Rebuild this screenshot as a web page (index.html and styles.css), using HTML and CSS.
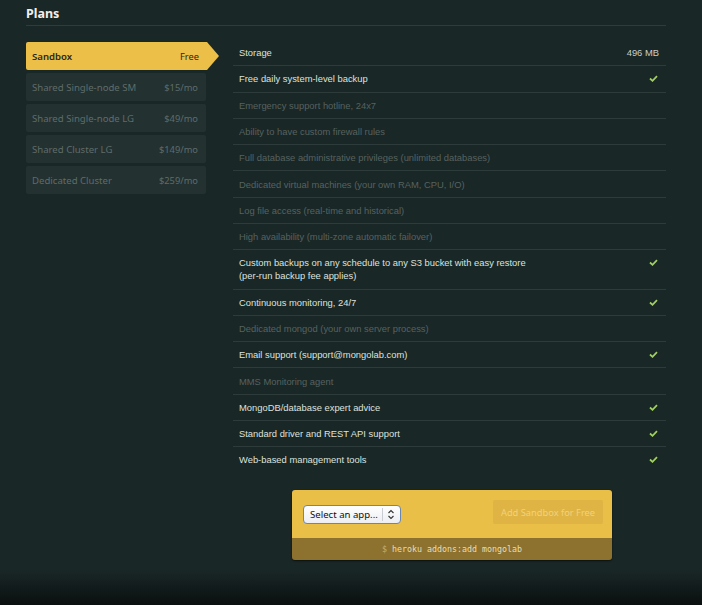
FILE: index.html
```html
<!DOCTYPE html>
<html>
<head>
<meta charset="utf-8">
<link rel="stylesheet" href="styles.css">
</head>
<body>
<div class="page">
  <h2 class="title">Plans</h2>
  <div class="content">
    <ul class="plans">
      <li class="plan active"><span class="pname">Sandbox</span><span class="price">Free</span></li>
      <li class="plan"><span class="pname">Shared Single-node SM</span><span class="price">$15/mo</span></li>
      <li class="plan"><span class="pname">Shared Single-node LG</span><span class="price">$49/mo</span></li>
      <li class="plan"><span class="pname">Shared Cluster LG</span><span class="price">$149/mo</span></li>
      <li class="plan"><span class="pname">Dedicated Cluster</span><span class="price">$259/mo</span></li>
    </ul>
    <div class="main">
      <ul class="features">
        <li class="feat on"><span>Storage</span><span class="val">496 MB</span></li>
        <li class="feat on"><span>Free daily system-level backup</span><svg class="chk" viewBox="0 0 9 7"><path d="M1 3.5 L3.5 5.8 L8 1.2"/></svg></li>
        <li class="feat"><span>Emergency support hotline, 24x7</span></li>
        <li class="feat"><span>Ability to have custom firewall rules</span></li>
        <li class="feat"><span>Full database administrative privileges (unlimited databases)</span></li>
        <li class="feat"><span>Dedicated virtual machines (your own RAM, CPU, I/O)</span></li>
        <li class="feat"><span>Log file access (real-time and historical)</span></li>
        <li class="feat"><span>High availability (multi-zone automatic failover)</span></li>
        <li class="feat on"><span>Custom backups on any schedule to any S3 bucket with easy restore<br>(per-run backup fee applies)</span><svg class="chk" viewBox="0 0 9 7"><path d="M1 3.5 L3.5 5.8 L8 1.2"/></svg></li>
        <li class="feat on"><span>Continuous monitoring, 24/7</span><svg class="chk" viewBox="0 0 9 7"><path d="M1 3.5 L3.5 5.8 L8 1.2"/></svg></li>
        <li class="feat"><span>Dedicated mongod (your own server process)</span></li>
        <li class="feat on"><span>Email support (support@mongolab.com)</span><svg class="chk" viewBox="0 0 9 7"><path d="M1 3.5 L3.5 5.8 L8 1.2"/></svg></li>
        <li class="feat"><span>MMS Monitoring agent</span></li>
        <li class="feat on"><span>MongoDB/database expert advice</span><svg class="chk" viewBox="0 0 9 7"><path d="M1 3.5 L3.5 5.8 L8 1.2"/></svg></li>
        <li class="feat on"><span>Standard driver and REST API support</span><svg class="chk" viewBox="0 0 9 7"><path d="M1 3.5 L3.5 5.8 L8 1.2"/></svg></li>
        <li class="feat on"><span>Web-based management tools</span><svg class="chk" viewBox="0 0 9 7"><path d="M1 3.5 L3.5 5.8 L8 1.2"/></svg></li>
      </ul>
      <div class="card">
        <div class="card-top">
          <div class="select"><span class="sel-text">Select an app...</span><span class="sel-sep"></span><svg class="sel-arrows" viewBox="0 0 8 11"><path d="M1.5 4 L4 1.5 L6.5 4 M1.5 7 L4 9.5 L6.5 7"/></svg></div>
          <div class="btn">Add Sandbox for Free</div>
        </div>
        <div class="card-cmd"><span class="dollar">$</span> heroku addons:add mongolab</div>
      </div>
    </div>
  </div>
</div>
</body>
</html>
```

FILE: styles.css
```css
html, body {
  margin: 0;
  padding: 0;
}
body {
  width: 702px;
  height: 605px;
  overflow: hidden;
  background: linear-gradient(to bottom, #1a2727 0, #1a2727 570px, #0a0f0f 605px);
  font-family: "Liberation Sans", Arial, sans-serif;
}
.page {
  padding: 0 36px 0 26px;
}
.title {
  margin: 0;
  height: 26px;
  padding-top: 6px;
  box-sizing: border-box;
  font-family: "Noto Sans", "Open Sans", sans-serif;
  font-size: 12.5px;
  font-weight: 700;
  color: #eef0ee;
  line-height: 16px;
  border-bottom: 1px solid #2e3c3c;
}
.content {
  display: flex;
  align-items: flex-start;
}
.plans {
  list-style: none;
  margin: 16px 0 0;
  padding: 0;
  width: 180px;
  display: flex;
  flex-direction: column;
  gap: 3px;
}
.plan {
  position: relative;
  height: 28px;
  display: flex;
  justify-content: space-between;
  align-items: center;
  padding: 0 8px 0 6px;
  background: #233131;
  border-radius: 2px;
  font-family: "Noto Sans", "Open Sans", sans-serif;
  font-size: 9.6px;
  color: #5f6c69;
}
.plan .price {
  font-size: 9.3px;
}
.plan.active {
  background: #ebbf48;
  color: #2b2712;
  width: 181px;
  box-sizing: border-box;
  border-radius: 2px 0 0 2px;
  padding-right: 8px;
}
.plan.active .pname {
  font-weight: 600;
}
.plan.active::after {
  content: "";
  position: absolute;
  left: 100%;
  top: 0;
  border-style: solid;
  border-width: 14px 0 14px 12px;
  border-color: transparent transparent transparent #ebbf48;
}
.main {
  margin-left: 27px;
  flex: 1;
}
.features {
  list-style: none;
  margin: 14px 0 0;
  padding: 0;
}
.feat {
  display: flex;
  justify-content: space-between;
  align-items: flex-start;
  padding: 6.2px 7px 6.1px 6px;
  line-height: 13px;
  font-size: 9.4px;
  color: #56625f;
  border-bottom: 1px solid #2d3b3b;
}
.feat:last-child {
  border-bottom: none;
}
.feat.on {
  color: #dde2de;
}
.feat .val {
  color: #c9cfcb;
}
.chk {
  width: 9px;
  height: 7px;
  margin-top: 3px;
  margin-right: 1px;
  fill: none;
  stroke: #9fcf60;
  stroke-width: 1.8;
}
.card {
  margin: 17px 0 0 59px;
  width: 320px;
  border-radius: 3px;
  overflow: hidden;
  box-shadow: 0 1px 2px rgba(0,0,0,0.6);
}
.card-top {
  background: #e9bf48;
  height: 48px;
  display: flex;
  justify-content: space-between;
  align-items: center;
  padding: 0 9px 0 11px;
}
.select {
  width: 98px;
  height: 19px;
  box-sizing: border-box;
  border: 1px solid #6b86ae;
  border-radius: 4px;
  background: linear-gradient(to bottom, #ffffff, #eceef2);
  display: flex;
  align-items: center;
  padding-left: 6px;
  font-family: "Noto Sans", "Open Sans", sans-serif;
  font-size: 9.6px;
  color: #111;
  margin-top: 2px;
}
.sel-text {
  flex: 1;
  white-space: nowrap;
}
.sel-sep {
  width: 1px;
  height: 13px;
  background: #c9ccd2;
  margin-right: 4px;
}
.sel-arrows {
  width: 8px;
  height: 11px;
  margin-right: 5px;
  fill: none;
  stroke: #333;
  stroke-width: 1.1;
}
.btn {
  width: 110px;
  height: 24px;
  background: #dfb444;
  border-radius: 2px;
  display: flex;
  align-items: center;
  justify-content: center;
  font-family: "Noto Sans", "Open Sans", sans-serif;
  font-size: 9.3px;
  color: #f2d27a;
  margin-bottom: 3px;
}
.card-cmd {
  background: #8c722e;
  height: 22px;
  line-height: 22px;
  text-align: center;
  font-family: "DejaVu Sans Mono", "Liberation Mono", monospace;
  font-size: 8.3px;
  color: #e8dcb8;
}
.dollar {
  color: #c5ae75;
}
```
